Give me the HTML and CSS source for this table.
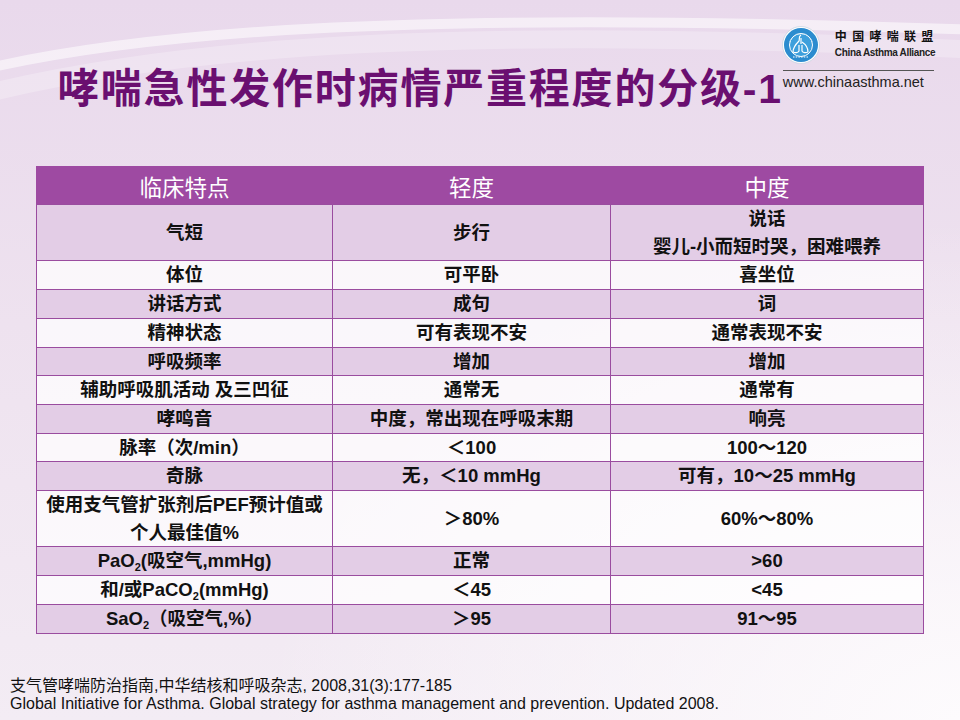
FILE: index.html
```html
<!DOCTYPE html>
<html lang="zh-CN">
<head>
<meta charset="utf-8">
<title>哮喘急性发作时病情严重程度的分级-1</title>
<link rel="stylesheet" href="styles.css">
</head>
<body>
<div class="slide">
  <svg class="swoosh" width="960" height="720" viewBox="0 0 960 720" aria-hidden="true">
    <path d="M-20 70 C 150 30, 420 10, 980 30" fill="none" stroke="#ffffff" stroke-opacity="0.55" stroke-width="10"/>
    <path d="M-20 95 C 180 45, 460 25, 980 50" fill="none" stroke="#ffffff" stroke-opacity="0.25" stroke-width="18"/>
  </svg>
  <header class="top">
    <h1 class="title">哮喘急性发作时病情严重程度的分级-1</h1>
    <div class="brand">
      <div class="brand-row">
        <svg class="logo" width="38" height="38" viewBox="0 0 38 38" aria-hidden="true">
          <circle cx="19" cy="19" r="18.5" fill="#ffffff" stroke="#c9d6e2" stroke-width="0.8"/>
          <circle cx="19" cy="19" r="17" fill="#2b8ccf"/>
          <circle cx="19" cy="19" r="11.5" fill="#3d9fdc" stroke="#ffffff" stroke-width="1"/>
          <path d="M19 9 C 16 11, 18 13, 17 15 C 14 18, 11 22, 11 26 C 13 27, 16 27, 17 25 L 17 19" fill="none" stroke="#ffffff" stroke-width="1.2"/>
          <path d="M19 12 L 19 18 M 20 16 C 23 18, 26 22, 26 26 C 24 27, 21 27, 20 25 L 20 19" fill="none" stroke="#ffffff" stroke-width="1.2"/>
          <path d="M8 16 A 11.5 11.5 0 0 1 30 16" fill="none" stroke="#ffffff" stroke-width="0.6" stroke-dasharray="1 1"/>
          <path d="M11 31 L 27 31" stroke="#ffffff" stroke-width="1" stroke-dasharray="1.5 1.2"/>
        </svg>
        <div class="brand-text">
          <div class="brand-cn">中国哮喘联盟</div>
          <div class="brand-en">China Asthma Alliance</div>
        </div>
      </div>
      <div class="brand-url">www.chinaasthma.net</div>
    </div>
  </header>

  <table class="grade">
    <colgroup>
      <col class="c1"><col class="c2"><col class="c3">
    </colgroup>
    <thead>
      <tr><th>临床特点</th><th>轻度</th><th>中度</th></tr>
    </thead>
    <tbody>
      <tr class="odd"><td>气短</td><td>步行</td><td>说话<br>婴儿-小而短时哭，困难喂养</td></tr>
      <tr class="even"><td>体位</td><td>可平卧</td><td>喜坐位</td></tr>
      <tr class="odd"><td>讲话方式</td><td>成句</td><td>词</td></tr>
      <tr class="even"><td>精神状态</td><td>可有表现不安</td><td>通常表现不安</td></tr>
      <tr class="odd"><td>呼吸频率</td><td>增加</td><td>增加</td></tr>
      <tr class="even"><td>辅助呼吸肌活动 及三凹征</td><td>通常无</td><td>通常有</td></tr>
      <tr class="odd"><td>哮鸣音</td><td>中度，常出现在呼吸末期</td><td>响亮</td></tr>
      <tr class="even"><td>脉率（次/min）</td><td>＜100</td><td>100～120</td></tr>
      <tr class="odd"><td>奇脉</td><td>无，＜10 mmHg</td><td>可有，10～25 mmHg</td></tr>
      <tr class="even"><td>使用支气管扩张剂后PEF预计值或<br>个人最佳值%</td><td>＞80%</td><td>60%～80%</td></tr>
      <tr class="odd"><td>PaO<sub>2</sub>(吸空气,mmHg)</td><td>正常</td><td>&gt;60</td></tr>
      <tr class="even"><td>和/或PaCO<sub>2</sub>(mmHg)</td><td>＜45</td><td>&lt;45</td></tr>
      <tr class="odd"><td>SaO<sub>2</sub>（吸空气,%）</td><td>＞95</td><td>91～95</td></tr>
    </tbody>
  </table>

  <footer class="refs">
    <p>支气管哮喘防治指南,中华结核和呼吸杂志, 2008,31(3):177-185</p>
    <p>Global Initiative for Asthma. Global strategy for asthma management and prevention. Updated 2008.</p>
  </footer>
</div>
</body>
</html>
```

FILE: styles.css
```css
html, body {
  margin: 0;
  padding: 0;
}

body {
  width: 960px;
  height: 720px;
  overflow: hidden;
  font-family: "Liberation Sans", "Noto Sans CJK SC", sans-serif;
}

.slide {
  position: relative;
  width: 960px;
  height: 720px;
  overflow: hidden;
  background:
    radial-gradient(ellipse 700px 500px at 100% 100%, #fdfbfd 0%, rgba(253, 251, 253, 0) 100%),
    linear-gradient(180deg, #e9d9ec 0%, #eee2ef 45%, #f3ecf4 100%);
}

.swoosh {
  position: absolute;
  left: 0;
  top: 0;
}

.top {
  position: relative;
  display: flex;
  align-items: flex-start;
  height: 166px;
}

.title {
  flex: none;
  margin: 67px 0 0 58px;
  font-family: "Liberation Sans", "Noto Sans CJK SC", sans-serif;
  font-size: 41px;
  line-height: 44px;
  font-weight: bold;
  color: #6a0f70;
  white-space: nowrap;
  letter-spacing: 1.8px;
}

.brand {
  flex: none;
  margin: 25px 29px 0 auto;
  width: 151px;
}

.brand-row {
  display: flex;
  align-items: center;
  gap: 15px;
  height: 40px;
}

.logo {
  margin-left: -1px;
  flex: none;
}

.brand-text {
  display: flex;
  flex-direction: column;
  gap: 3px;
  margin-top: -2px;
}

.brand-cn {
  font-size: 12px;
  line-height: 13px;
  font-weight: bold;
  letter-spacing: 5.3px;
  color: #111;
  white-space: nowrap;
}

.brand-en {
  font-size: 10px;
  line-height: 11px;
  font-weight: bold;
  letter-spacing: -0.35px;
  color: #222;
  white-space: nowrap;
}

.brand-url {
  margin-top: 5px;
  border-top: 1px solid #555;
  padding-top: 3px;
  font-size: 14.5px;
  line-height: 16px;
  color: #222;
  white-space: nowrap;
}

.grade {
  position: relative;
  margin-left: 36px;
  width: 887px;
  border-collapse: collapse;
  table-layout: fixed;
  text-align: center;
}

.c1 { width: 296px; }
.c2 { width: 278px; }
.c3 { width: 313px; }

.grade th {
  height: 37px;
  padding: 0;
  background: #9e4aa2;
  color: #ffffff;
  font-size: 22.5px;
  font-weight: normal;
  border: 1px solid #9e4aa2;
  border-bottom-color: #9a4c9f;
}

.grade td {
  padding: 0;
  border: 1px solid #9a4c9f;
  font-size: 18.5px;
  line-height: 27.7px;
  font-weight: bold;
  color: #111;
}

.grade sub {
  font-size: 11px;
  line-height: 0;
  vertical-align: -4px;
}

.odd td {
  background: #e3cde6;
}

.even td {
  background: rgba(255, 255, 255, 0.72);
}

.refs {
  position: relative;
  margin: 43px 0 0 10px;
  font-size: 16px;
  line-height: 18.5px;
  color: #111;
}

.refs p {
  margin: 0;
  white-space: nowrap;
}
```
